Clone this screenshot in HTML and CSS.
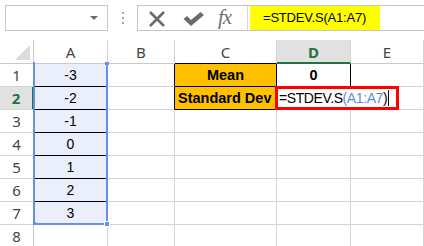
FILE: index.html
```html
<!DOCTYPE html>
<html>
<head>
<meta charset="utf-8">
<link rel="stylesheet" href="styles.css">
</head>
<body>
<div class="topbar">
  <div class="namebox"><span class="dd"></span></div>
  <div class="dots"><i></i><i></i><i></i></div>
  <div class="fbar">
    <div class="icons">
      <svg class="ic-x" width="20" height="16" viewBox="0 0 20 16"><path d="M3 1 L17 15 M17 1 L3 15" stroke="#6b6b6b" stroke-width="2.6" fill="none"/></svg>
      <svg class="ic-ok" width="21" height="14" viewBox="0 0 21 14"><path d="M0.5 7 L4 4 L8 8 L17.5 0 L21 3 L8 14 Z" fill="#6b6b6b"/></svg>
      <span class="fx">fx</span>
    </div>
    <div class="finput"><span class="hl">=STDEV.S(A1:A7)</span></div>
  </div>
</div>
<div class="sheet">
  <div class="cell corner"><svg width="15" height="15" viewBox="0 0 15 15"><polygon points="15,0 15,15 0,15" fill="#dcdcdc"/></svg></div>
  <div class="cell ch">A</div>
  <div class="cell ch lb">B</div>
  <div class="cell ch">C</div>
  <div class="cell ch act">D</div>
  <div class="cell ch">E</div>

  <div class="cell rh">1</div>
  <div class="cell a">-3</div>
  <div class="cell lb"></div>
  <div class="cell c bb">Mean</div>
  <div class="cell d1">0</div>
  <div class="cell"></div>

  <div class="cell rh ract">2</div>
  <div class="cell a">-2</div>
  <div class="cell lb"></div>
  <div class="cell c bb left">Standard Dev</div>
  <div class="cell d2"></div>
  <div class="cell"></div>

  <div class="cell rh">3</div>
  <div class="cell a">-1</div>
  <div class="cell"></div>
  <div class="cell"></div>
  <div class="cell"></div>
  <div class="cell"></div>

  <div class="cell rh">4</div>
  <div class="cell a">0</div>
  <div class="cell"></div>
  <div class="cell"></div>
  <div class="cell"></div>
  <div class="cell"></div>

  <div class="cell rh">5</div>
  <div class="cell a">1</div>
  <div class="cell"></div>
  <div class="cell"></div>
  <div class="cell"></div>
  <div class="cell"></div>

  <div class="cell rh">6</div>
  <div class="cell a">2</div>
  <div class="cell"></div>
  <div class="cell"></div>
  <div class="cell"></div>
  <div class="cell"></div>

  <div class="cell rh">7</div>
  <div class="cell a last">3</div>
  <div class="cell"></div>
  <div class="cell"></div>
  <div class="cell"></div>
  <div class="cell"></div>

  <div class="cell rh">8</div>
  <div class="cell"></div>
  <div class="cell"></div>
  <div class="cell"></div>
  <div class="cell"></div>
  <div class="cell"></div>

  <div class="sel">
    <span class="h tl"></span><span class="h tr"></span><span class="h bl"></span><span class="h br"></span>
  </div>
  <div class="edit">=STDEV.S<span class="ref">(A1:A7</span>)<span class="caret"></span></div>
</div>
</body>
</html>
```

FILE: styles.css
```css
* { box-sizing: border-box; }
html, body { margin: 0; padding: 0; background: #fff; }
body { width: 424px; height: 246px; overflow: hidden; font-family: "Liberation Sans", Arial, sans-serif; }

.topbar { height: 40px; display: flex; align-items: flex-start; padding-top: 5px; }
.namebox { margin-left: 5px; width: 103px; height: 26px; border: 1px solid #c6c6c6; position: relative; }
.dd { position: absolute; right: 9px; top: 10px; width: 0; height: 0; border-left: 4px solid transparent; border-right: 4px solid transparent; border-top: 4px solid #6a6a6a; }
.dots { width: 29px; height: 26px; display: flex; flex-direction: column; align-items: center; justify-content: center; gap: 3px; }
.dots i { display: block; width: 2px; height: 2px; background: #a8a8a8; }
.fbar { flex: 1; height: 26px; border: 1px solid #c6c6c6; border-right: none; display: flex; }
.icons { width: 110px; border-right: 1px solid #d6d6d6; display: flex; align-items: center; padding-left: 9px; }
.ic-x { margin-top: 1px; }
.ic-ok { margin-left: 16px; margin-top: 1px; }
.fx { margin-left: 14px; font-family: "Liberation Serif", "Times New Roman", serif; font-style: italic; font-size: 21px; color: #707070; letter-spacing: -1px; line-height: 1; margin-top: -1px; }
.finput { flex: 1; padding-left: 2px; }
.hl { display: inline-block; width: 130px; height: 24px; background: #ffff00; padding-left: 13px; font-size: 13px; letter-spacing: -0.2px; line-height: 24px; color: #000; }

.sheet { position: relative; display: grid; grid-template-columns: 34px 74px 67px 102px 74px 1fr; grid-template-rows: 24px repeat(8, 23px); }
.cell { border-right: 1px solid #d4d4d4; border-bottom: 1px solid #d4d4d4; font-size: 14px; display: flex; align-items: center; justify-content: center; color: #000; white-space: nowrap; }
.corner { border-color: #c9c9c9; justify-content: flex-end; align-items: flex-end; padding: 0 3px 3px 0; }
.ch { font-family: "Noto Sans", "Open Sans", sans-serif; font-size: 15px; color: #444; border-bottom-color: #c9c9c9; padding-top: 1px; }
.ch.lb { border-right-color: #d4d4d4; }
.ch.act { background: #e1e1e1; color: #217346; font-weight: bold; border-bottom: 2px solid #217346; }
.ch:nth-child(4) { border-bottom-color: #000; }
.rh { font-family: "Noto Sans", "Open Sans", sans-serif; font-size: 15px; color: #444; border-right-color: #c9c9c9; }
.rh.ract { background: #e1e1e1; color: #217346; font-weight: bold; border-right: 2px solid #217346; }
.a { background: #eaeffb; border-bottom-color: #000; }
.a.last { border-bottom-color: #d4d4d4; }
.lb { border-right-color: #000; }
.c { background: #ffc000; font-weight: bold; font-size: 14.5px; border-right-color: #000; border-bottom-color: #000; }
.c.left { justify-content: flex-start; padding-left: 3px; }
.d1 { font-weight: bold; font-size: 14.5px; border-right-color: #000; border-bottom-color: #000; }
.d2 { border-right-color: #000; border-bottom-color: #000; }

.sel { position: absolute; left: 33px; top: 23px; width: 75px; height: 162px; border: 2px solid #6590e6; border-top: none; border-left-width: 2px; }
.h { position: absolute; background: #6590e6; }
.h.tl { left: -2px; top: -1px; width: 2px; height: 3px; }
.h.tr { right: -3px; top: -1px; width: 4px; height: 3px; }
.h.bl { left: -2px; bottom: -2px; width: 3px; height: 3px; }
.h.br { right: -4px; bottom: -4px; width: 6px; height: 6px; border: 1px solid #fff; }

.edit { position: absolute; left: 275px; top: 46px; width: 124px; height: 24px; border: 3px solid #ff0000; background: #fff; font-size: 14px; letter-spacing: -0.4px; line-height: 18px; padding-left: 1px; white-space: nowrap; overflow: hidden; color: #000; }
.ref { color: #5b8be6; }
.caret { display: inline-block; width: 1px; height: 16px; background: #000; vertical-align: -3px; margin-left: 1px; }
```
